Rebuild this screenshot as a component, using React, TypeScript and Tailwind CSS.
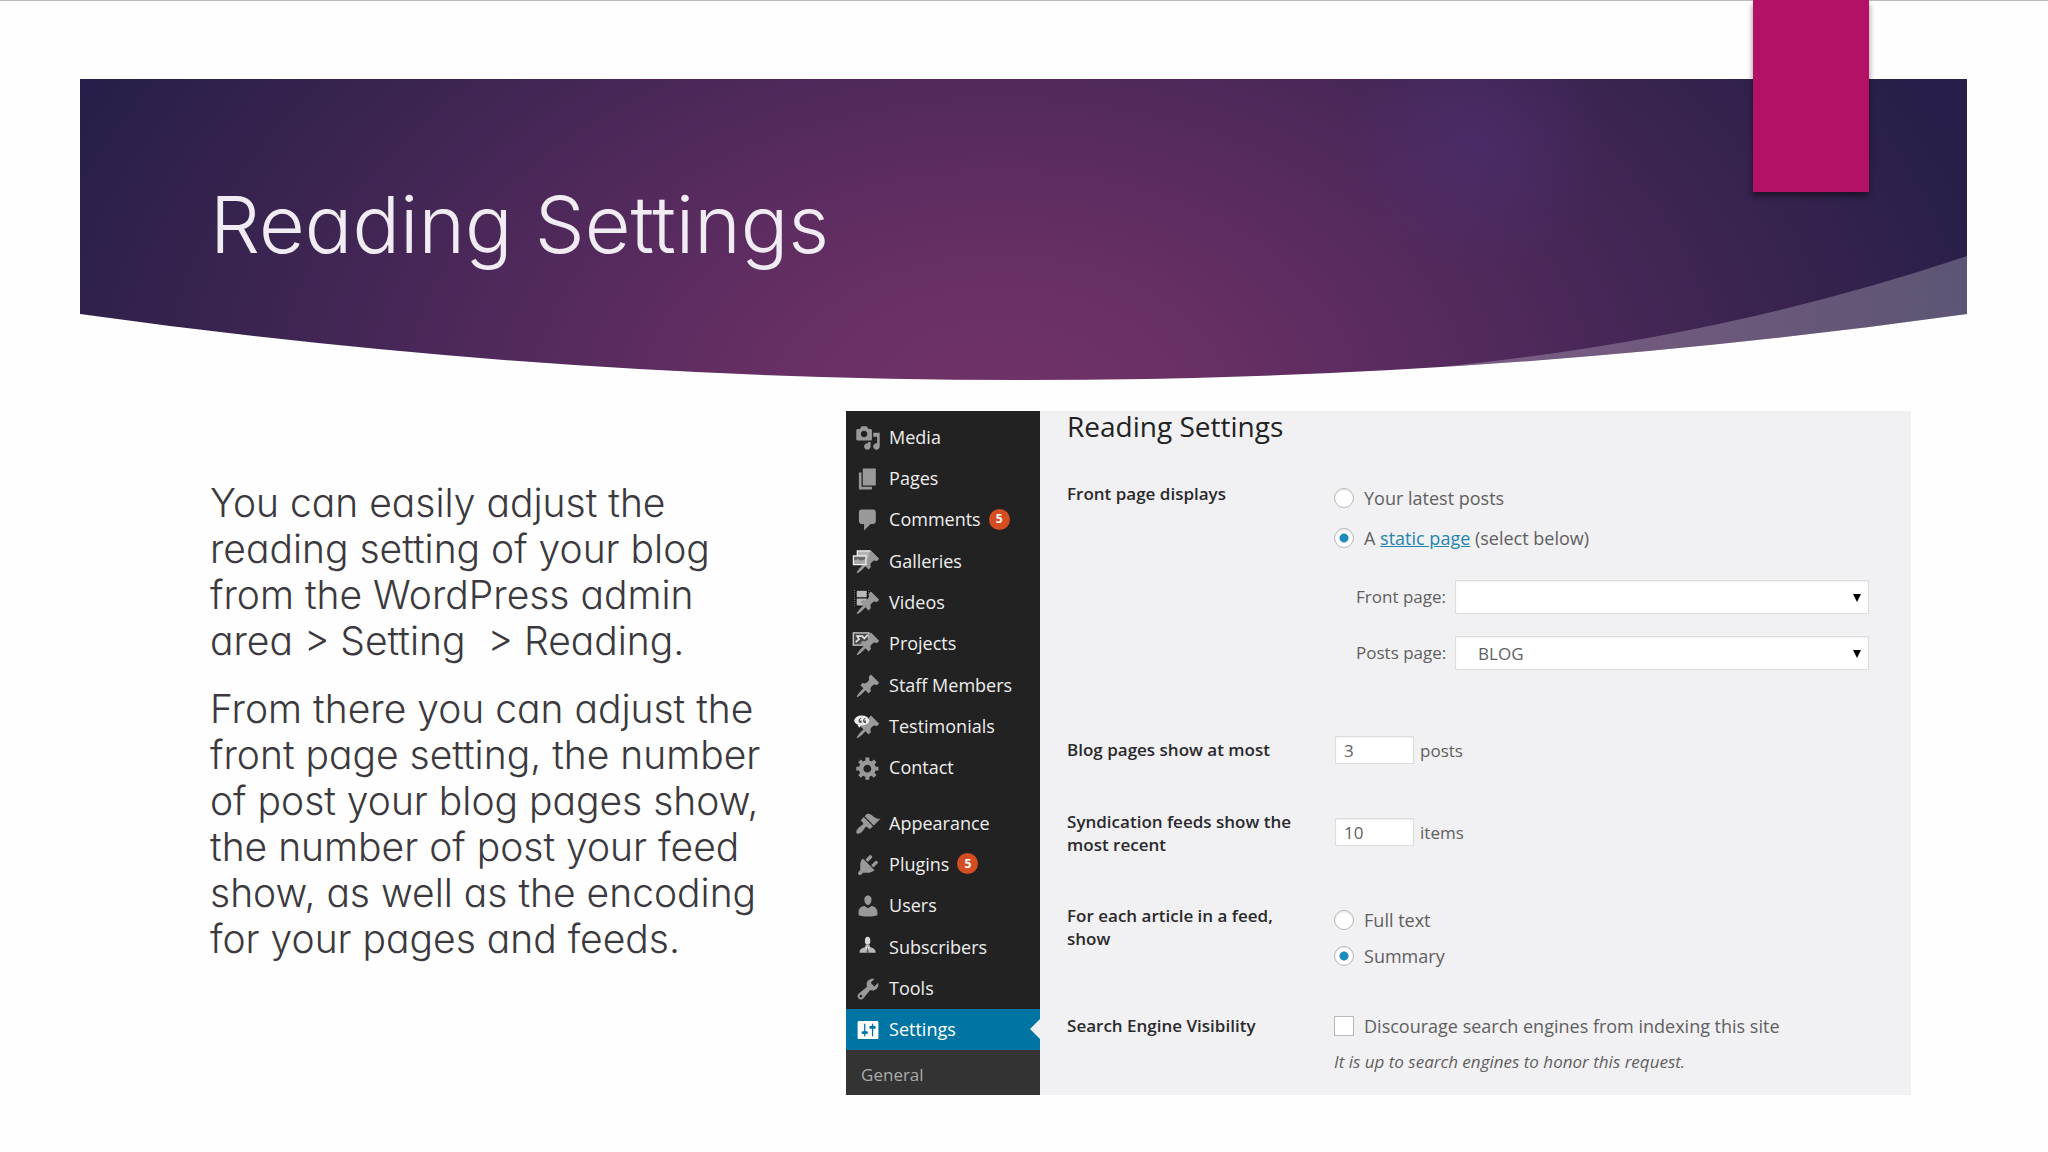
import React from 'react';

type MenuItem = {
  label: string;
  icon: React.ReactNode;
  count?: number;
  active?: boolean;
};

const PIN =
  'M10.44 3.02l1.82-1.82 6.36 6.35-1.83 1.82c-1.05-.68-2.48-.57-3.41.36l-.75.75c-.92.93-1.04 2.35-.35 3.41l-1.83 1.82-2.41-2.41-2.8 2.79c-.42.42-3.38 2.71-3.8 2.29s1.86-3.39 2.28-3.81l2.79-2.79L4.1 9.36l1.83-1.82c1.05.69 2.48.57 3.4-.36l.75-.75c.93-.92 1.05-2.35.36-3.41z';

const contentMenu: MenuItem[] = [
  {
    label: 'Media',
    icon: (
      <path d="M13 11V4c0-.55-.45-1-1-1h-1.67L9 1H5L3.67 3H2c-.55 0-1 .45-1 1v7c0 .55.45 1 1 1h10c.55 0 1-.45 1-1zM7 4.5c1.38 0 2.5 1.12 2.5 2.5S8.38 9.5 7 9.5 4.5 8.38 4.5 7 5.62 4.5 7 4.5zM14 6h5v10.5c0 1.38-1.12 2.5-2.5 2.5S14 17.88 14 16.5s1.12-2.5 2.5-2.5c.17 0 .34.02.5.05V9h-3V6zm-4 8.05V13h2v3.5c0 1.38-1.12 2.5-2.5 2.5S7 17.88 7 16.5 8.12 14 9.5 14c.17 0 .34.02.5.05z" />
    ),
  },
  { label: 'Pages', icon: <path d="M6 15V2h10v13H6zm-1 1h8v2H3V5h2v11z" /> },
  {
    label: 'Comments',
    count: 5,
    icon: <path d="M5 2h9c1.1 0 2 .9 2 2v7c0 1.1-.9 2-2 2h-2l-5 5v-5H5c-1.1 0-2-.9-2-2V4c0-1.1.9-2 2-2z" />,
  },
  {
    label: 'Galleries',
    icon: (
      <>
        <path fill="#b5b5b5" stroke="#f1f1f1" strokeWidth="1" d="M1.8 1.4h9.8v6H1.8z" />
        <path d={PIN} />
        <path fill="#a8a8a8" stroke="#f1f1f1" strokeWidth="1" d="M-1.2 5.4h9.6V12h-9.6z" />
        <path fill="#6a6a6a" d="M-.7 6h8.6v1.6l-3 1.4-2.6-1.2-3 1z" />
      </>
    ),
  },
  {
    label: 'Videos',
    icon: (
      <>
        <path fill="#111" d="M-1 0h12.4v13H-1z" />
        <path stroke="#8c8c8c" strokeWidth=".8" strokeDasharray=".8 .9" d="M-.3 0v13M10.6 0v13" />
        <path fill="#b9b9b9" d="M1.3.5H9v5H1.3zM1.3 6.6H9v5.4H1.3z" />
        <path d={PIN} />
      </>
    ),
  },
  {
    label: 'Projects',
    icon: (
      <>
        <path fill="#4a4a4a" stroke="#cfcfcf" strokeWidth="1" d="M-1.3 1.5h12v9.4h-12z" />
        <path fill="none" stroke="#e2e2e2" strokeWidth="1.3" d="M.5 8.6l2.6-2.4L1.6 4h4l1.6 1.8L9.8 3" />
        <path d={PIN} />
      </>
    ),
  },
  { label: 'Staff Members', icon: <path d={PIN} /> },
  {
    label: 'Testimonials',
    icon: (
      <>
        <path d={PIN} />
        <ellipse cx="5.2" cy="5" rx="5.8" ry="3.9" fill="#ededed" />
        <path fill="#ededed" d="M1.8 8l1.4 2.6L5 8.4z" />
        <path fill="none" stroke="#555" strokeWidth=".9" d="M4.6 3.3c-1 .3-1.5 1-1.5 2.2h1.5v.9H3.3M8 3.3c-1 .3-1.5 1-1.5 2.2H8v.9H6.700" />
      </>
    ),
  },
  {
    label: 'Contact',
    icon: (
      <path d="M18 12h-2.180c-.17.7-.44 1.350-.81 1.930l1.540 1.540-2.100 2.100-1.540-1.540c-.58.36-1.230.63-1.910.79V19H8v-2.180c-.68-.16-1.330-.43-1.910-.79l-1.540 1.540-2.120-2.120 1.540-1.540c-.36-.58-.63-1.230-.79-1.910H1V9.030h2.170c.16-.7.44-1.350.8-1.940L2.430 5.550l2.100-2.100 1.540 1.540c.58-.37 1.240-.64 1.930-.81V2h3v2.180c.68.16 1.330.43 1.910.79l1.540-1.540 2.120 2.120-1.540 1.540c.36.59.64 1.240.8 1.940H18V12zm-8.500 1.500c1.660 0 3-1.340 3-3s-1.340-3-3-3-3 1.340-3 3 1.340 3 3 3z" />
    ),
  },
];

const adminMenu: MenuItem[] = [
  {
    label: 'Appearance',
    icon: (
      <path d="M14.480 11.060L7.410 3.990l1.500-1.500c.5-.56 2.300-.47 3.510.32 1.210.8 1.430 1.280 2.910 2.100 1.180.64 2.450 1.260 4.450.85zm-.71.71L6.700 4.700 4.930 6.470c-.39.39-.39 1.020 0 1.410l1.060 1.060c.39.39.39 1.030 0 1.420-.6.6-1.430 1.110-2.210 1.690-.35.26-.7.53-1.010.84C1.430 14.230.4 16.080 1.400 17.070c.99 1 2.840-.03 4.180-1.360.31-.31.58-.66.85-1.020.57-.78 1.080-1.610 1.690-2.210.39-.39 1.020-.39 1.410 0l1.060 1.060c.39.39 1.020.39 1.410 0z" />
    ),
  },
  {
    label: 'Plugins',
    count: 5,
    icon: (
      <path d="M13.110 4.360L9.870 7.600 8 5.730l3.240-3.240c.35-.34 1.050-.2 1.560.32.52.51.66 1.210.31 1.550zm-8 1.770l.91-1.120 9.010 9.010-1.190.84c-.71.71-2.630 1.160-3.820 1.160H6.140L4.900 17.260c-.59.59-1.540.59-2.120 0-.59-.58-.59-1.530 0-2.120l1.240-1.240v-3.880c0-1.130.4-3.190 1.090-3.890zm7.260 3.970l3.240-3.240c.34-.35 1.040-.21 1.550.31.52.51.66 1.210.31 1.550l-3.240 3.250z" />
    ),
  },
  {
    label: 'Users',
    icon: (
      <path d="M10 9.250c-2.270 0-2.730-3.440-2.730-3.440C7 4.020 7.820 2 9.970 2c2.160 0 2.980 2.020 2.710 3.810 0 0-.41 3.440-2.680 3.440zm0 2.570L12.720 10c2.390 0 4.520 2.330 4.520 4.530v2.490s-3.650 1.130-7.240 1.130c-3.650 0-7.240-1.130-7.240-1.130v-2.490c0-2.250 1.940-4.480 4.470-4.480z" />
    ),
  },
  {
    label: 'Subscribers',
    icon: (
      <>
        <ellipse cx="9.7" cy="4.4" rx="2.1" ry="3" fill="#d8d8d8" />
        <path fill="#b8b8b8" d="M3.5 13.6c0-2.6 1.6-3.6 4.2-4.2l.7-2H11l.7 2c2.6.6 4.2 1.6 4.2 4.2z" />
        <path fill="#fff" d="M8.2 9l1.5 4.6L11.2 9l-1.5.8z" />
        <path fill="#555" d="M9.3 9.8h.8l.4 3.8H8.900z" />
      </>
    ),
  },
  {
    label: 'Tools',
    icon: (
      <path d="M16.680 9.770c-1.340 1.340-3.300 1.670-4.950.99l-5.410 6.520c-.99.99-2.590.99-3.580 0s-.99-2.590 0-3.570l6.520-5.420c-.68-1.650-.35-3.610.99-4.950 1.280-1.280 3.120-1.620 4.720-1.060l-2.890 2.890 2.820 2.820 2.860-2.870c.53 1.580.18 3.390-1.080 4.650zM3.810 16.210c.4.39 1.040.39 1.430 0 .4-.4.4-1.040 0-1.430-.39-.4-1.030-.4-1.430 0-.39.39-.39 1.030 0 1.430z" />
    ),
  },
  {
    label: 'Settings',
    active: true,
    icon: (
      <path d="M18 16V4c0-.55-.45-1-1-1H3c-.55 0-1 .45-1 1v12c0 .55.45 1 1 1h14c.55 0 1-.45 1-1zM8 11h1c.55 0 1 .45 1 1s-.45 1-1 1H8v1.500c0 .28-.22.5-.5.5s-.5-.22-.5-.5V13H6c-.55 0-1-.45-1-1s.45-1 1-1h1V5.500c0-.28.22-.5.5-.5s.5.22.5.5V11zm5-2h-1c-.55 0-1-.45-1-1s.45-1 1-1h1V5.500c0-.28.22-.5.5-.5s.5.22.5.5V7h1c.55 0 1 .45 1 1s-.45 1-1 1h-1v5.500c0 .28-.22.5-.5.5s-.5-.22-.5-.5V9z" />
    ),
  },
];

const MenuLink: React.FC<{ item: MenuItem }> = ({ item }) => (
  <a
    href="#"
    aria-current={item.active ? 'page' : undefined}
    className={
      item.active
        ? 'relative flex min-h-10 flex-1 items-center gap-2 bg-[#0074a2] pl-[9px] text-lg text-white'
        : 'flex min-h-10 flex-1 items-center gap-2 pl-[9px] text-lg text-[#eee]'
    }
  >
    <svg
      viewBox="0 0 20 20"
      className={item.active ? 'mt-0.5 size-[26px] shrink-0 fill-white' : 'mt-0.5 size-[26px] shrink-0 overflow-visible fill-[#999]'}
      aria-hidden="true"
    >
      {item.icon}
    </svg>
    {item.label}
    {item.count && (
      <span className="flex size-[21px] items-center justify-center rounded-full bg-[#d54e21] text-xs font-bold text-white">
        {item.count}
      </span>
    )}
    {item.active && (
      <svg viewBox="0 0 10 20" className="absolute right-0 top-1/2 h-5 w-2.5 -translate-y-1/2 fill-[#f1f0f2]" aria-hidden="true">
        <path d="M10 0v20L0 10z" />
      </svg>
    )}
  </a>
);

const Sidebar: React.FC = () => (
  <nav className="flex w-[194px] shrink-0 flex-col bg-[#222] pt-[5px]">
    <div className="flex flex-[9] flex-col">
      {contentMenu.map((item) => (
        <MenuLink key={item.label} item={item} />
      ))}
    </div>
    <div className="h-3.5" />
    <div className="flex flex-[6] flex-col">
      {adminMenu.map((item) => (
        <MenuLink key={item.label} item={item} />
      ))}
    </div>
    <a href="#" className="flex h-[45px] items-center bg-[#333] pl-[15px] pt-1 text-[17px] text-[#aaa]">
      General
    </a>
  </nav>
);

const Radio: React.FC<{ name: string; checked?: boolean; children: React.ReactNode }> = ({ name, checked, children }) => (
  <label className="flex h-6 items-center gap-2.5 text-lg">
    <input
      type="radio"
      name={name}
      defaultChecked={checked}
      className="size-5 shrink-0 appearance-none rounded-full border border-[#b8b8bb] bg-white shadow-[inset_0_1px_2px_rgba(0,0,0,0.1)] checked:bg-[radial-gradient(circle,#1e8cbe_4px,#fff_5px)]"
    />
    <span>{children}</span>
  </label>
);

const PageSelect: React.FC<{ id: string; label: string; value: string }> = ({ id, label, value }) => (
  <div className="flex items-center">
    <label htmlFor={id} className="w-[99px] shrink-0 pb-0.5">
      {label}
    </label>
    <div className="relative flex-1">
      <select
        id={id}
        defaultValue={value}
        className="block h-[34px] w-full appearance-none border border-[#dddddf] bg-white pl-[22px] shadow-[inset_0_1px_2px_rgba(0,0,0,0.07)]"
      >
        <option value={value}>{value}</option>
      </select>
      <svg viewBox="0 0 8 8" className="pointer-events-none absolute right-2 top-3.5 size-2 fill-black" aria-hidden="true">
        <path d="M0 0h8L4 8z" />
      </svg>
    </div>
  </div>
);

const CountField: React.FC<{ id: string; value: string; unit: string }> = ({ id, value, unit }) => (
  <div className="flex h-7 items-center gap-1.5 pl-px">
    <input
      id={id}
      type="text"
      defaultValue={value}
      className="h-7 w-[79px] border border-[#dddddf] bg-white px-2 shadow-[inset_0_1px_2px_rgba(0,0,0,0.07)]"
    />
    <span>{unit}</span>
  </div>
);

const SettingsForm: React.FC = () => (
  <form className="min-w-0 flex-1 bg-[#f1f0f2] pb-[22px] pl-[27px] pr-[42px] text-[17px] leading-[23px] text-[#5f5f61]">
    <h2 className="mb-10 text-[28px] leading-[31px] text-[#222]">Reading Settings</h2>

    <div className="grid grid-cols-[267px_1fr] pb-[66px]" role="radiogroup" aria-labelledby="front-label">
      <span id="front-label" className="font-semibold text-[#2a2a2c]">Front page displays</span>
      <div className="flex flex-col pt-1">
        <Radio name="front">Your latest posts</Radio>
        <div className="mt-4">
          <Radio name="front" checked>
            A <a href="#" className="text-[#2585b0] underline">static page</a> (select below)
          </Radio>
        </div>
        <div className="mt-[30px] flex flex-col gap-[22px] pl-[22px]">
          <PageSelect id="front-page" label="Front page:" value="" />
          <PageSelect id="posts-page" label="Posts page:" value="BLOG" />
        </div>
      </div>
    </div>

    <div className="grid grid-cols-[267px_1fr] pb-[46px]">
      <label htmlFor="blog-count" className="pt-0.5 font-semibold text-[#2a2a2c]">Blog pages show at most</label>
      <CountField id="blog-count" value="3" unit="posts" />
    </div>

    <div className="grid grid-cols-[267px_1fr] pb-12">
      <label htmlFor="feed-count" className="pr-6 font-semibold text-[#2a2a2c]">Syndication feeds show the most recent</label>
      <div className="pt-2">
        <CountField id="feed-count" value="10" unit="items" />
      </div>
    </div>

    <div className="grid grid-cols-[267px_1fr] pb-[46px]" role="radiogroup" aria-labelledby="feed-label">
      <span id="feed-label" className="pr-6 font-semibold text-[#2a2a2c]">For each article in a feed, show</span>
      <div className="flex flex-col gap-3 pt-1">
        <Radio name="feed">Full text</Radio>
        <Radio name="feed" checked>Summary</Radio>
      </div>
    </div>

    <div className="grid grid-cols-[267px_1fr]">
      <span className="font-semibold text-[#2a2a2c]">Search Engine Visibility</span>
      <div>
        <label className="flex h-6 items-center gap-2.5 text-lg">
          <input type="checkbox" className="size-5 shrink-0 appearance-none border border-[#b8b8bb] bg-white" />
          Discourage search engines from indexing this site
        </label>
        <p className="mt-3 italic">It is up to search engines to honor this request.</p>
      </div>
    </div>
  </form>
);

const Banner: React.FC = () => (
  <header className="relative ml-20 mr-[81px] h-[301px] pl-[130px] pt-[99px]">
    <svg viewBox="0 0 1887 301" preserveAspectRatio="none" className="absolute inset-0 size-full" aria-hidden="true">
      <defs>
        <radialGradient id="base" gradientUnits="userSpaceOnUse" cx="0" cy="0" r="1" gradientTransform="translate(920 330) scale(1030 680)">
          <stop offset="0" stopColor="#703267" />
          <stop offset="0.2" stopColor="#693064" />
          <stop offset="0.4" stopColor="#592b5f" />
          <stop offset="0.6" stopColor="#472757" />
          <stop offset="0.8" stopColor="#36234e" />
          <stop offset="1" stopColor="#271f49" />
        </radialGradient>
        <radialGradient id="glow" gradientUnits="userSpaceOnUse" cx="1395" cy="65" r="130">
          <stop offset="0" stopColor="#503078" stopOpacity="0.5" />
          <stop offset="1" stopColor="#503078" stopOpacity="0" />
        </radialGradient>
      </defs>
      <path fill="url(#base)" d="M0 0h1887v235Q943 367 0 235z" />
      <path fill="url(#glow)" d="M1265 0h260v195h-260z" />
      <path fill="#fff" fillOpacity="0.24" d="M1887 177v58Q1623 272 1360 288Q1641 260 1887 177z" />
    </svg>
    <h1 className="relative text-[79px] font-light leading-[92px] text-[#f1ecf4]">Reading Settings</h1>
  </header>
);

const App: React.FC = () => {
  return (
    <div className="relative min-h-screen border-t border-[#bababa] bg-[#fefefe] pt-[78px] font-['Inter',sans-serif] [font-feature-settings:'cv11']">
      <Banner />
      {/* Ribbon hanging over the banner */}
      <div className="absolute -top-px right-[179px] h-48 w-[116px] bg-[#b31166] shadow-[0_4px_6px_rgba(0,0,0,0.45)]" />

      <main className="flex items-start justify-between pl-[210px] pr-[137px] pt-[31px]">
        <div className="flex max-w-[576px] flex-1 flex-col gap-[22px] whitespace-pre-wrap pt-[69px] text-[39px] font-light leading-[46px] text-[#3b393d]">
          <p>{'You can easily adjust the reading setting of your blog from the WordPress admin area > Setting  > Reading.'}</p>
          <p>
            From there you can adjust the front page setting, the number of post your blog pages show, the number of post your feed show, as well as the encoding for your pages and feeds.
          </p>
        </div>
        <section className="flex w-[52vw] font-['Open_Sans',sans-serif] [font-feature-settings:normal]">
          <Sidebar />
          <SettingsForm />
        </section>
      </main>
    </div>
  );
};

export default App;
